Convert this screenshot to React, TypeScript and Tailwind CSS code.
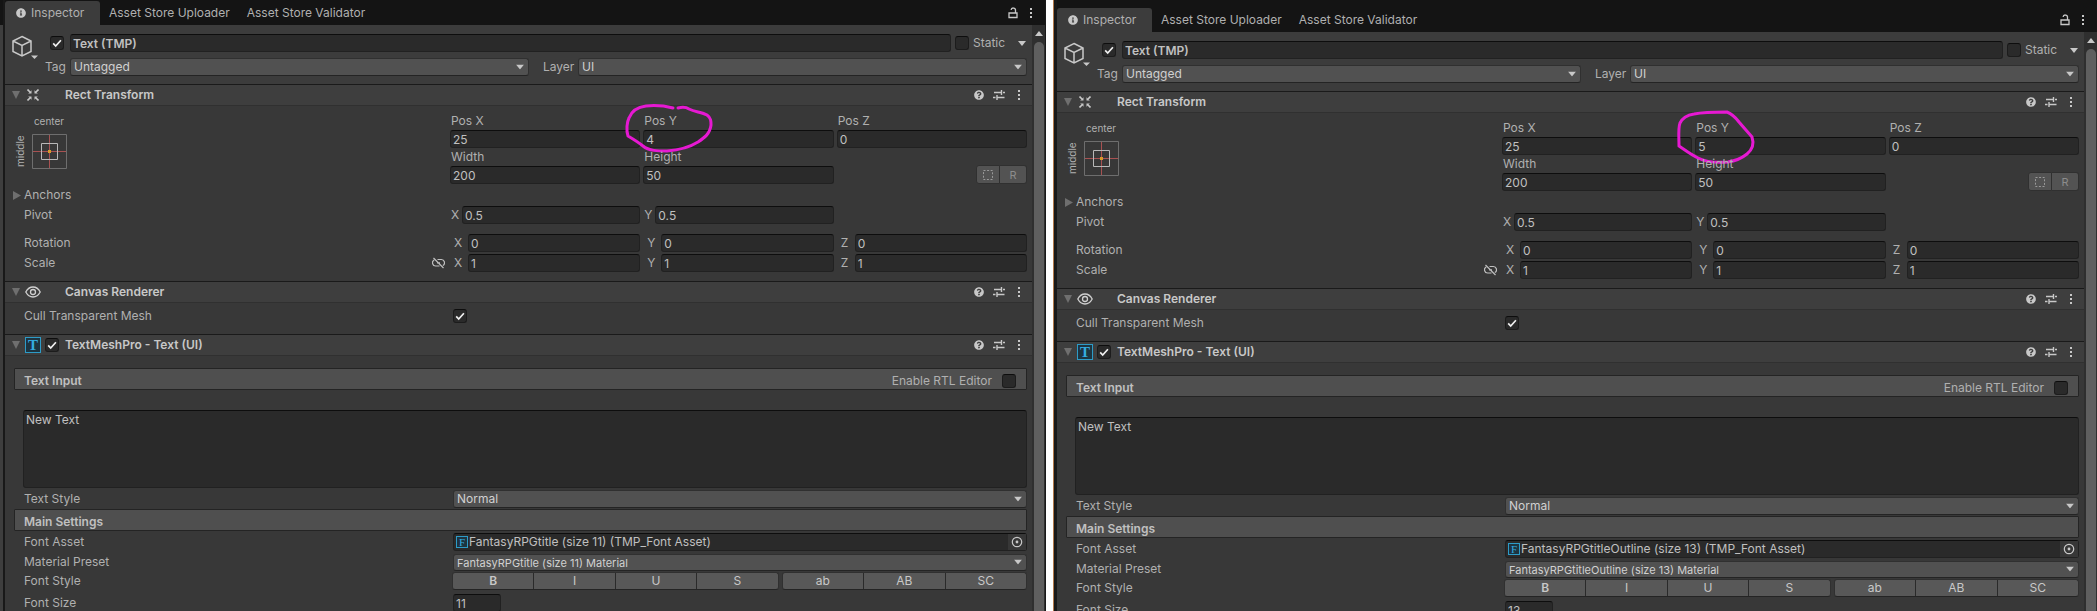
import { useId, type ReactNode } from "react";
import { FaInfoCircle, FaQuestionCircle } from "react-icons/fa";
import clsx from "clsx";

type Inspected = {
  posY: string;
  fontAsset: string;
  fontSize: string;
  marker: string;
};

const LEFT: Inspected = {
  posY: "4",
  fontAsset: "FantasyRPGtitle (size 11)",
  fontSize: "11",
  marker:
    "M678 108 C682 107 686 107 689 109 C695 112 702 112 707 115 C711 118 711 121 711 125 C710 134 704 138 698 142 C690 147 680 150 667 151 C658 151 649 151 643 146 C638 142 633 139 628 136 C626 130 627 122 629 118 C632 110 638 107 646 106 C656 105 665 106 673 108",
};

const RIGHT: Inspected = {
  posY: "5",
  fontAsset: "FantasyRPGtitleOutline (size 13)",
  fontSize: "13",
  marker:
    "M627 139 C627 131 626 121 628 116 C631 110 636 108 642 107 C652 105 664 105 675 105 C680 107 684 111 687 115 C692 121 696 125 700 130 C702 136 701 142 695 147 C690 151 683 154 676 155 C664 156 654 155 646 151 C638 147 633 143 627 139",
};

function Caret({ className }: { className?: string }) {
  return (
    <svg viewBox="0 0 8 5" className={clsx("w-2 h-[5px] fill-[#c8c8c8]", className)}>
      <path d="M0 0h8L4 5z" />
    </svg>
  );
}

function Kebab() {
  return (
    <svg viewBox="0 0 4 12" className="w-1 h-3 fill-[#c8c8c8]">
      <path d="M1 1h2v2H1zM1 5h2v2H1zM1 9h2v2H1z" />
    </svg>
  );
}

function Field({ value, label, className }: { value: string; label: string; className?: string }) {
  return (
    <input
      aria-label={label}
      defaultValue={value}
      className={clsx(
        "h-[18px] min-w-0 w-full rounded-[3px] border border-[#212121] border-t-[#0d0d0d] bg-[#2a2a2a] px-[2px] text-[#c0c0c0] outline-none",
        className
      )}
    />
  );
}

function Dropdown({ value, id, className }: { value: string; id: string; className?: string }) {
  return (
    <div className={clsx("relative min-w-0", className)}>
      <select
        id={id}
        className="block h-full w-full appearance-none rounded-[3px] border border-[#303030] border-b-[#242424] bg-[#515151] px-[3px] text-[#d0d0d0] outline-none"
      >
        <option>{value}</option>
      </select>
      <Caret className="absolute right-[5px] top-1/2 -translate-y-1/2 pointer-events-none" />
    </div>
  );
}

function Check({ id, label, checked = false }: { id?: string; label?: string; checked?: boolean }) {
  return (
    <span className="relative block w-[14px] h-[14px] shrink-0">
      <input
        type="checkbox"
        id={id}
        aria-label={label}
        defaultChecked={checked}
        className="peer block w-full h-full appearance-none rounded-[3px] border border-[#1c1c1c] border-t-[#0d0d0d] bg-[#2a2a2a]"
      />
      <svg
        viewBox="0 0 14 14"
        className="absolute inset-0 hidden peer-checked:block pointer-events-none fill-none stroke-[#f0f0f0] stroke-[1.7]"
      >
        <path d="M3.2 7.4 5.7 10 10.9 4.3" />
      </svg>
    </span>
  );
}

function ComponentHeader({ title, icon, enabled }: { title: string; icon: ReactNode; enabled?: boolean }) {
  return (
    <header className="flex items-center h-[22px] border-t border-t-[#1a1a1a] border-b border-b-[#303030] bg-[#3e3e3e] pl-[7px] pr-[7px]">
      <button aria-label={"Collapse " + title} className="w-[13px]">
        <svg viewBox="0 0 8 8" className="w-2 h-2 fill-[#6f6f6f]">
          <path d="M0 0h8L4 8z" />
        </svg>
      </button>
      <span className="w-4 h-4 grid place-items-center">{icon}</span>
      <span className="w-6 pl-1">{enabled && <Check label={"Enable " + title} checked />}</span>
      <h2 className="flex-1 font-semibold text-[#c8c8c8]">{title}</h2>
      <div className="flex items-center gap-2">
        <button aria-label="Help" className="w-3 grid place-items-center">
          <FaQuestionCircle className="w-[10px] h-[10px] text-[#c8c8c8]" />
        </button>
        <button aria-label="Presets">
          <svg viewBox="0 0 12 12" className="w-3 h-3 fill-none stroke-[#c8c8c8] stroke-[1.4]">
            <path d="M1 3.500h7.500M10 3.500h2M8.500 1v5M0 8.500h2.500M4 8.500h7.500M4 6v5" />
          </svg>
        </button>
        <button aria-label="More" className="w-3 grid place-items-center">
          <Kebab />
        </button>
      </div>
    </header>
  );
}

function Row({ label, children, wide = false }: { label: ReactNode; children?: ReactNode; wide?: boolean }) {
  return (
    <div className="flex items-center h-[18px]">
      <div className={clsx("shrink-0", wide ? "w-[429px]" : "w-[426px]")}>{label}</div>
      <div className="flex-1 min-w-0">{children}</div>
    </div>
  );
}

function Axes({ name, values, tight = false }: { name: string; values: string[]; tight?: boolean }) {
  return (
    <div className="grid grid-cols-3 gap-[3px]">
      {values.map((v, i) => (
        <label key={i} className="flex items-center">
          <span className={clsx("shrink-0", tight ? "w-3 pl-px" : "w-[18px] pl-1")}>{"XYZ"[i]}</span>
          <Field label={name + " " + "XYZ"[i]} value={v} />
        </label>
      ))}
    </div>
  );
}

function Cell({ label, value, children }: { label: string; value: string; children?: ReactNode }) {
  return (
    <label className="relative block">
      <span className="block h-[18px] leading-[18px] pl-px">{label}</span>
      <Field label={label} value={value} className="block" />
      {children}
    </label>
  );
}

function SectionBar({ title, children }: { title: string; children?: ReactNode }) {
  return (
    <div className="flex items-center h-[22px] -ml-[10px] pt-1 pl-[9px] pr-[10px] border border-[#242424] bg-[#4f4f4f] rounded-[1px]">
      <h3 className="flex-1 font-semibold text-[#c0c0c0]">{title}</h3>
      {children}
    </div>
  );
}

function Inspector({ data, className }: { data: Inspected; className?: string }) {
  const id = useId();

  return (
    <section className="flex-1 min-w-0">
      {/* Tabs */}
      <div className={clsx("flex bg-[#141414]", className)}>
        <div className="flex flex-1 h-[25px] pt-px">
          <button className="flex items-center gap-[5px] w-[95px] pl-[11px] rounded-t-[3px] bg-[#3c3c3c]">
            <FaInfoCircle className="w-[10px] h-[10px] text-[#c8c8c8]" />
            Inspector
          </button>
          <button className="pl-[9px]">Asset Store Uploader</button>
          <button className="pl-[17px]">Asset Store Validator</button>
          <div className="flex items-center gap-[11px] ml-auto pr-3">
            <button aria-label="Lock">
              <svg viewBox="0 0 10 12" className="w-[10px] h-3 fill-none stroke-[#c8c8c8] stroke-[1.300]">
                <path d="M1 6h8v4.500H1zM7.500 6V3.500a2.200 2.200 0 0 0-4.400-.5" />
              </svg>
            </button>
            <button aria-label="Tab menu">
              <Kebab />
            </button>
          </div>
        </div>
      </div>

      <div className="flex">
        <div className="flex-1 min-w-0">
          {/* GameObject header */}
          <div className="flex h-[59px] pt-[9px] pr-[5px] bg-[#3c3c3c]">
            <button aria-label="Select icon" className="flex w-10 pl-[6px] pt-px">
              <svg viewBox="0 0 27 24" className="w-[27px] h-6 fill-none stroke-[#c8c8c8] stroke-[1.500] shrink-0">
                <path d="M11 1.500 20 6v10.500l-9 4.500-9-4.500V6zM2 6l9 4.500L20 6M11 10.500V21" />
                <path d="M20 20.500h7L23.500 24z" className="fill-[#c8c8c8] stroke-none" />
              </svg>
            </button>
            <div className="flex-1 min-w-0 flex flex-col gap-[6px]">
              <div className="flex items-center pl-[5px]">
                <Check label="Active" checked />
                <Field label="Name" value="Text (TMP)" className="ml-[6px] mr-1 flex-1 font-semibold" />
                <Check id={id + "static"} />
                <label htmlFor={id + "static"} className="pl-1 w-[49px]">
                  Static
                </label>
                <button aria-label="Static flags" className="w-[9px]">
                  <Caret />
                </button>
              </div>
              <div className="flex items-center">
                <label htmlFor={id + "tag"} className="w-[25px] shrink-0">
                  Tag
                </label>
                <Dropdown id={id + "tag"} value="Untagged" className="flex-[46] h-[18px]" />
                <label htmlFor={id + "layer"} className="w-[49px] pl-[14px] shrink-0">
                  Layer
                </label>
                <Dropdown id={id + "layer"} value="UI" className="flex-[45] h-[18px]" />
              </div>
            </div>
          </div>

          {/* Rect Transform */}
          <ComponentHeader
            title="Rect Transform"
            icon={
              <svg viewBox="0 0 12 12" className="w-3 h-3 fill-[#c8c8c8] stroke-[#c8c8c8]">
                <path
                  d="M4.500 4.500H1.200L4.500 1.200zM7.500 4.500V1.200l3.300 3.300zM4.500 7.500v3.300L1.200 7.500zM7.500 7.500h3.300l-3.300 3.300z"
                  className="stroke-none"
                />
                <path d="M.5.5l2.500 2.500M11.500.5 9 3M.5 11.500 3 9M11.500 11.500 9 9" className="stroke-[1.600]" />
              </svg>
            }
          />
          <div className="pt-[6px] pb-[9px] pl-[19px] pr-[5px]">
            <div className="flex">
              <div className="w-[426px] shrink-0 flex gap-1 -ml-3 mr-3 text-[10px]">
                <span className="w-4 h-[34px] mt-[22px] text-center leading-4 [writing-mode:vertical-rl] rotate-180">
                  middle
                </span>
                <div className="w-[34px] flex flex-col items-center">
                  <span className="h-[22px] leading-[18px]">center</span>
                  <button aria-label="Anchor presets">
                    <svg viewBox="0 0 35 35" className="w-[35px] h-[35px] fill-none">
                      <path d="M17.500 1v33M1 17.500h33" className="stroke-[#a85252]" />
                      <path d="M.5.5h34v34H.5z" className="stroke-[#6e6e6e]" />
                      <path d="M9.500 9.500h16v16h-16z" className="stroke-[#b8b8b8]" />
                      <path d="M16 16h3v3h-3z" className="fill-[#d89a2b]" />
                    </svg>
                  </button>
                </div>
              </div>
              <div className="flex-1 grid grid-cols-3 gap-x-[3px]">
                <Cell label="Pos X" value="25" />
                <Cell label="Pos Y" value={data.posY}>
                  <svg
                    viewBox="623 100 92 60"
                    className="absolute -left-5 -top-3 w-[92px] h-[60px] pointer-events-none fill-none stroke-[#e619d2] stroke-3"
                  >
                    <path d={data.marker} strokeLinecap="round" strokeLinejoin="round" />
                  </svg>
                </Cell>
                <Cell label="Pos Z" value="0" />
                <Cell label="Width" value="200" />
                <Cell label="Height" value="50" />
                <div className="flex justify-end items-end">
                  <button
                    aria-label="Blueprint mode"
                    className="w-6 h-[19px] grid place-items-center rounded-l-[3px] border border-[#303030] bg-[#535353]"
                  >
                    <svg viewBox="0 0 12 12" className="w-3 h-3 fill-none stroke-[#9a9a9a]">
                      <path d="M1.500 1.500h9v9h-9z" strokeDasharray="2 1.600" />
                    </svg>
                  </button>
                  <button className="w-[27px] h-[19px] rounded-r-[3px] border border-l-0 border-[#303030] bg-[#535353] text-[#8c8c8c] text-[11px]">
                    R
                  </button>
                </div>
              </div>
            </div>
            <div className="pt-[2px] flex flex-col gap-[2px]">
              <Row
                label={
                  <button className="flex items-center -ml-[11px] gap-[3px]">
                    <svg viewBox="0 0 8 9" className="w-2 h-[9px] fill-[#6f6f6f]">
                      <path d="M0 0v9l8-4.500z" />
                    </svg>
                    Anchors
                  </button>
                }
              />
              <Row label="Pivot">
                <Axes name="Pivot" values={["0.5", "0.5"]} tight />
              </Row>
            </div>
            <div className="pt-[10px] flex flex-col gap-[2px]">
              <Row label="Rotation">
                <Axes name="Rotation" values={["0", "0", "0"]} />
              </Row>
              <Row
                label={
                  <div className="flex items-center justify-between pr-[5px]">
                    Scale
                    <button aria-label="Constrain proportions">
                      <svg viewBox="0 0 13 12" className="w-[13px] h-3 fill-none stroke-[#c0c0c0] stroke-[1.200]">
                        <path d="M5.500 2.500H9a3.200 3.200 0 0 1 1.800 6M7.500 9H4a3.200 3.200 0 0 1-1.800-6M5 5.800h3M1.500 1l10 10" />
                      </svg>
                    </button>
                  </div>
                }
              >
                <Axes name="Scale" values={["1", "1", "1"]} />
              </Row>
            </div>
          </div>

          {/* Canvas Renderer */}
          <ComponentHeader
            title="Canvas Renderer"
            icon={
              <svg viewBox="0 0 16 12" className="w-4 h-3 fill-none stroke-[#d0d0d0] stroke-[1.300]">
                <path d="M.8 6C2.500 2.800 5 1 8 1s5.500 1.800 7.200 5C13.500 9.200 11 11 8 11S2.500 9.200.8 6z" />
                <circle cx="8" cy="6" r="2.500" />
              </svg>
            }
          />
          <div className="pt-1 pb-[9px] pl-[19px] pr-[5px]">
            <Row wide label={<label htmlFor={id + "cull"}>Cull Transparent Mesh</label>}>
              <Check id={id + "cull"} checked />
            </Row>
          </div>

          {/* TextMeshPro */}
          <ComponentHeader
            title="TextMeshPro - Text (UI)"
            enabled
            icon={
              <span className="w-4 h-4 border border-[#2d9bc7] bg-[#1d3440] text-center font-['Liberation_Serif',serif] font-bold text-[15px] leading-[14px] text-[#34ace0]">
                T
              </span>
            }
          />
          <div className="pt-3 pl-[19px] pr-[5px]">
            <SectionBar title="Text Input">
              <label htmlFor={id + "rtl"} className="pr-[10px]">
                Enable RTL Editor
              </label>
              <Check id={id + "rtl"} />
            </SectionBar>
            <textarea
              aria-label="Text Input"
              defaultValue="New Text"
              className="block w-[calc(100%+1px)] h-[78px] -ml-px mt-5 px-[2px] py-px leading-4 resize-none rounded-[3px] border border-[#212121] border-t-[#0d0d0d] bg-[#2a2a2a] text-[#c0c0c0] outline-none"
            />
            <div className="pt-[2px] pb-px">
              <Row wide label={<label htmlFor={id + "style"}>Text Style</label>}>
                <Dropdown id={id + "style"} value="Normal" className="h-[18px]" />
              </Row>
            </div>
            <SectionBar title="Main Settings" />
            <div className="pt-[2px] flex flex-col gap-[2px]">
              <Row wide label="Font Asset">
                <div className="flex items-center h-[18px] pl-[2px] rounded-[3px] border border-[#212121] border-t-[#0d0d0d] bg-[#2a2a2a] text-[#c0c0c0]">
                  <span className="w-3 h-3 mr-px border border-[#2d9bc7] bg-[#1d3440] text-center font-['Liberation_Serif',serif] text-[11px] leading-[10px] text-[#34ace0]">
                    F
                  </span>
                  <span className="flex-1">{data.fontAsset} (TMP_Font Asset)</span>
                  <button aria-label="Pick font asset" className="w-[18px] h-4 grid place-items-center bg-[#373737]">
                    <svg viewBox="0 0 12 12" className="w-3 h-3 fill-none stroke-[#c8c8c8] stroke-[1.200]">
                      <circle cx="6" cy="6" r="4.700" />
                      <circle cx="6" cy="6" r="1.400" className="fill-[#c8c8c8] stroke-none" />
                    </svg>
                  </button>
                </div>
              </Row>
              <Row wide label={<label htmlFor={id + "mat"}>Material Preset</label>}>
                <Dropdown id={id + "mat"} value={data.fontAsset + " Material"} className="h-[17px] text-[11px]" />
              </Row>
            </div>
            <div className="pt-px flex flex-col gap-1">
              <Row wide label="Font Style">
                <div className="flex gap-[3px] -ml-px text-[#c8c8c8]">
                  {[
                    ["B", "I", "U", "S"],
                    ["ab", "AB", "SC"],
                  ].map((group, i) => (
                    <div
                      key={i}
                      className={clsx(
                        "flex h-[18px] rounded-[3px] border border-[#303030] border-b-[#242424] bg-[#585858] divide-x divide-[#2a2a2a]",
                        i === 0 ? "flex-[4]" : "flex-[3]"
                      )}
                    >
                      {group.map((s) => (
                        <button key={s} className={clsx("flex-1", s === "B" && "font-semibold")}>
                          {s}
                        </button>
                      ))}
                    </div>
                  ))}
                </div>
              </Row>
              <Row wide label={<label htmlFor={id + "size"}>Font Size</label>}>
                <input
                  id={id + "size"}
                  defaultValue={data.fontSize}
                  className="block w-12 h-[18px] rounded-[3px] border border-[#212121] border-t-[#0d0d0d] bg-[#2a2a2a] px-[2px] text-[#c0c0c0] outline-none"
                />
              </Row>
            </div>
          </div>
        </div>

        {/* Scrollbar */}
        <div className="w-[13px] h-screen pl-[2px] pr-px flex flex-col items-center bg-[#2f2f2f]">
          <svg viewBox="0 0 8 5" className="w-2 h-[5px] mt-[6px] mb-[6px] shrink-0 fill-[#c8c8c8]">
            <path d="M0 5h8L4 0z" />
          </svg>
          <div className="w-full flex-1 rounded-t-full bg-[#5f5f5f]" />
        </div>
      </div>
    </section>
  );
}

export default function App() {
  return (
    <main className="flex h-screen overflow-hidden bg-[#383838] font-[Inter,sans-serif] text-[12px] leading-4 text-[#b0b0b0]">
      <div className="w-[5px] shrink-0 border-r-2 border-[#191919] bg-[#3e3e3e]">
        <div className="h-[25px] bg-[#141414]" />
      </div>
      <Inspector data={LEFT} />
      <div className="w-[12px] shrink-0 border-l border-l-[#191919] border-r-3 border-r-[#191919] bg-white">
        <div className="h-full border-r border-[#b0784a]" />
      </div>
      <Inspector data={RIGHT} className="pt-[7px]" />
    </main>
  );
}
